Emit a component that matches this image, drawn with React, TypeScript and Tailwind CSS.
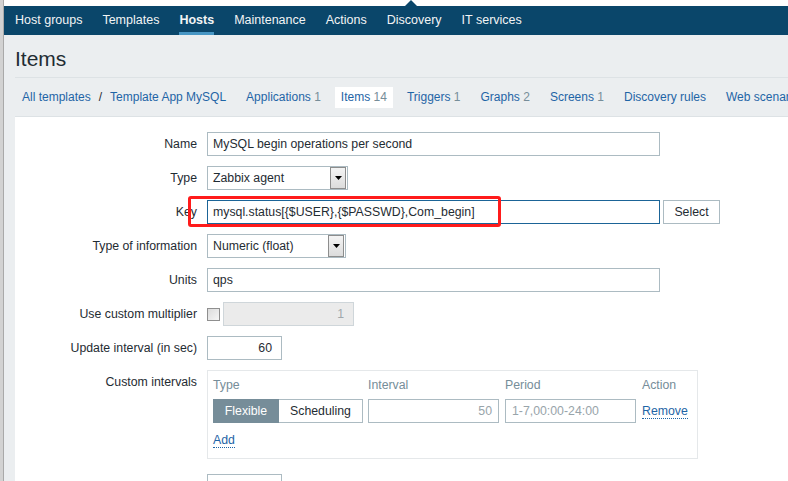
import React from "react";

const font = "font-['Liberation_Sans',Arial,sans-serif]";

const navItems = [
  "Host groups",
  "Templates",
  "Hosts",
  "Maintenance",
  "Actions",
  "Discovery",
  "IT services",
];

function Row({
  label,
  children,
  top,
  className = "",
}: {
  label: string;
  children: React.ReactNode;
  top?: boolean;
  className?: string;
}) {
  return (
    <div className={`flex shrink-0 gap-[10px] ${top ? "items-start" : "items-center"} ${className}`}>
      <div className="w-[182px] shrink-0 text-right leading-[24px] text-[#1f2c33] whitespace-nowrap">
        {label}
      </div>
      {children}
    </div>
  );
}

function TextInput({
  value,
  width,
  right,
  className = "",
}: {
  value: string;
  width: string;
  right?: boolean;
  className?: string;
}) {
  return (
    <div
      className={`${width} h-[24px] shrink-0 border border-[#acbbc2] bg-white px-[5px] leading-[22px] text-[#1f2c33] whitespace-nowrap overflow-hidden ${
        right ? "text-right pr-[9px]" : ""
      } ${className}`}
    >
      {value}
    </div>
  );
}

function SelectBox({ value, width }: { value: string; width: string }) {
  return (
    <div
      className={`${width} h-[24px] border border-[#acbbc2] bg-white flex items-center pl-[5px] pr-[1px] text-[#1f2c33]`}
    >
      <span className="flex-1 whitespace-nowrap">{value}</span>
      <div className="w-[16px] h-[22px] border border-[#8d8d8d] bg-gradient-to-b from-[#f4f4f4] to-[#dcdcdc] flex items-center justify-center">
        <svg width="7" height="4" viewBox="0 0 7 4">
          <polygon points="0,0 7,0 3.5,4" fill="#000" />
        </svg>
      </div>
    </div>
  );
}

function Tab({ name, count, active }: { name: string; count?: number; active?: boolean }) {
  return (
    <div
      className={`px-[6px] h-[21px] leading-[21px] text-[#1f65a6] ${active ? "bg-white" : ""}`}
    >
      {name}
      {count !== undefined && <span className="text-[#768d99]"> {count}</span>}
    </div>
  );
}

export default function App() {
  return (
    <div className={`w-[788px] h-[481px] overflow-hidden flex bg-white text-[12.3px] ${font}`}>
      {/* window edge */}
      <div className="w-[4px] shrink-0 flex">
        <div className="w-[3px] bg-[#d2d2d2]" />
        <div className="w-[1px] bg-[#a9a9a9]" />
      </div>

      <div className="flex-1 flex flex-col min-w-0 h-[481px] overflow-hidden">
        <div className="h-[6px] shrink-0 bg-white relative">
          <svg className="absolute left-[401px] top-0" width="12" height="6" viewBox="0 0 12 6">
            <polygon points="0,6 6,0 12,6" fill="#0a466a" />
          </svg>
        </div>

        {/* top menu */}
        <nav className="h-[29px] shrink-0 bg-[#0a466a] flex pl-[11px] gap-[20px]">
          {navItems.map((item) => (
            <div
              key={item}
              className={`h-full flex items-center relative text-[#f2f4f5] text-[12.5px] whitespace-nowrap ${
                item === "Hosts" ? "font-bold" : ""
              }`}
            >
              {item}
              {item === "Hosts" && (
                <div className="absolute left-0 right-0 bottom-0 h-[3px] bg-[#4796c4]" />
              )}
            </div>
          ))}
        </nav>

        <div className="flex-1 bg-[#ebeef0] pl-[11px] flex flex-col min-h-0">
          <div className="h-[42px] shrink-0 pt-[13px]">
            <h1 className="text-[21px] leading-[21px] text-[#1f2c33]">Items</h1>
          </div>
          <div className="h-[1px] shrink-0 bg-[#dde2e5]" />

          {/* breadcrumbs and tabs */}
          <div className="h-[38px] shrink-0 flex items-center pl-[1px] gap-[8px] whitespace-nowrap text-[12px]">
            <div className="flex items-center">
              <Tab name="All templates" />
              <span className="text-[#1f2c33] px-[2px]">/</span>
              <Tab name="Template App MySQL" />
            </div>
            <Tab name="Applications" count={1} />
            <Tab name="Items" count={14} active />
            <Tab name="Triggers" count={1} />
            <Tab name="Graphs" count={2} />
            <Tab name="Screens" count={1} />
            <Tab name="Discovery rules" />
            <Tab name="Web scenarios" />
          </div>

          {/* form */}
          <div className="flex-1 min-h-0 overflow-hidden bg-white border-t border-[#dde2e5] pt-[15px] flex flex-col gap-[10px]">
            <Row label="Name">
              <TextInput value="MySQL begin operations per second" width="w-[453px]" />
            </Row>
            <Row label="Type">
              <SelectBox value="Zabbix agent" width="w-[141px]" />
            </Row>
            <Row label="Key">
              <div className="relative flex gap-[3px]">
                <TextInput
                  value="mysql.status[{$USER},{$PASSWD},Com_begin]"
                  width="w-[453px]"
                  className="!border-[#1b6497]"
                />
                <button className="w-[57px] h-[24px] border border-[#acbbc2] bg-white text-[#1f2c33]">
                  Select
                </button>
                <div className="absolute left-[-19px] top-[-4px] w-[313px] h-[31px] border-[3px] border-[#ff1b1b] rounded-[3px]" />
              </div>
            </Row>
            <Row label="Type of information">
              <SelectBox value="Numeric (float)" width="w-[139px]" />
            </Row>
            <Row label="Units">
              <TextInput value="qps" width="w-[453px]" />
            </Row>
            <Row label="Use custom multiplier">
              <div className="flex items-center gap-[3px]">
                <div className="w-[13px] h-[13px] border border-[#8f8f8f] bg-gradient-to-br from-[#dcdcdc] to-[#f6f6f6]" />
                <div className="w-[131px] h-[24px] border border-[#cfd6da] bg-[#ebebeb] text-right pr-[9px] leading-[22px] text-[#a0a8ac]">
                  1
                </div>
              </div>
            </Row>
            <Row label="Update interval (in sec)">
              <TextInput value="60" width="w-[75px]" right />
            </Row>
            <Row label="Custom intervals" top>
              <div className="w-[491px] h-[89px] border border-[#e5e8ea] px-[5px] pt-[6px]">
                <div className="flex text-[#768d99] leading-[16px] h-[16px]">
                  <div className="w-[155px]">Type</div>
                  <div className="w-[137px]">Interval</div>
                  <div className="w-[137px]">Period</div>
                  <div>Action</div>
                </div>
                <div className="flex items-center mt-[6px] h-[24px]">
                  <div className="flex w-[150px] h-[24px] mr-[5px]">
                    <div className="w-[66px] bg-[#768d99] border border-[#768d99] text-white flex items-center justify-center">
                      Flexible
                    </div>
                    <div className="w-[84px] border border-[#acbbc2] border-l-0 text-[#1f2c33] flex items-center justify-center">
                      Scheduling
                    </div>
                  </div>
                  <div className="w-[131px] h-[24px] border border-[#acbbc2] text-right pr-[6px] leading-[22px] text-[#98a4aa] mr-[6px]">
                    50
                  </div>
                  <div className="w-[131px] h-[24px] border border-[#acbbc2] pl-[6px] leading-[22px] text-[#98a4aa] mr-[6px]">
                    1-7,00:00-24:00
                  </div>
                  <span className="text-[#1f65a6] border-b border-dotted border-[#1f65a6] leading-[14px]">
                    Remove
                  </span>
                </div>
                <div className="mt-[8px]">
                  <span className="text-[#1f65a6] border-b border-dotted border-[#1f65a6] leading-[14px]">
                    Add
                  </span>
                </div>
              </div>
            </Row>
            <Row label="" className="mt-[5px]">
              <TextInput value="" width="w-[75px]" />
            </Row>
          </div>
        </div>
      </div>
    </div>
  );
}
